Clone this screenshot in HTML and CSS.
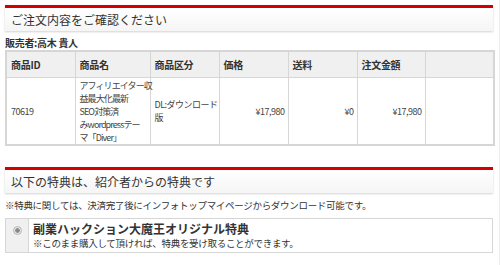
FILE: index.html
```html
<!doctype html>
<html>
<head>
  <meta charset="UTF-8" />
  <title>ご注文内容をご確認ください</title>
  <link rel="stylesheet" href="styles.css">
</head>
<body>
  <div class="page">
    <h2 class="section-title">ご注文内容をご確認ください</h2>
    <p class="seller">販売者:高木 貴人</p>
    <table class="order">
      <colgroup>
        <col class="c-id"><col class="c-name"><col class="c-kind"><col class="c-price">
        <col class="c-ship"><col class="c-total"><col class="c-extra">
      </colgroup>
      <thead>
        <tr>
          <th>商品ID</th>
          <th>商品名</th>
          <th>商品区分</th>
          <th>価格</th>
          <th>送料</th>
          <th>注文金額</th>
          <th></th>
        </tr>
      </thead>
      <tbody>
        <tr>
          <td>70619</td>
          <td class="name">アフィリエイター収<br>益最大化最新<br>SEO対策済<br>みwordpressテー<br>マ「Diver」</td>
          <td>DL:ダウンロード<br>版</td>
          <td class="num">¥17,980</td>
          <td class="num">¥0</td>
          <td class="num">¥17,980</td>
          <td></td>
        </tr>
      </tbody>
    </table>

    <h2 class="section-title second">以下の特典は、紹介者からの特典です</h2>
    <p class="note">※特典に関しては、決済完了後にインフォトップマイページからダウンロード可能です。</p>
    <div class="bonus">
      <div class="bonus-pick"><span class="radio"></span></div>
      <div class="bonus-body">
        <strong>副業ハックション大魔王オリジナル特典</strong>
        <span>※このまま購入して頂ければ、特典を受け取ることができます。</span>
      </div>
    </div>
  </div>
</body>
</html>
```

FILE: styles.css
```css
html, body {
  margin: 0;
  padding: 0;
  background: #fff;
  font-family: "Noto Sans CJK JP", "DejaVu Sans", sans-serif;
  color: #333;
}
.page {
  width: 488px;
  height: 265px;
  padding: 5px 6px 0 5px;
  border-right: 1px solid #ececec;
  box-sizing: content-box;
}
.section-title {
  margin: 0;
  height: 23px;
  line-height: 23px;
  border-top: 3px solid #d40000;
  padding: 0 6px;
  font-size: 12px;
  font-weight: normal;
  color: #333;
  background: linear-gradient(#fff, #f5f5f5);
  box-shadow: 0 1px 2px rgba(0, 0, 0, 0.18);
}
.section-title.second {
  margin-top: 21px;
}
.seller {
  margin: 0;
  padding-top: 5px;
  height: 14px;
  line-height: 14px;
  font-size: 10px;
  font-weight: bold;
  letter-spacing: -0.3px;
}
.order {
  width: 488px;
  border-collapse: collapse;
  table-layout: fixed;
  border: 2px solid #d6d6d6;
  font-size: 9px;
  line-height: 13px;
}
.c-id { width: 69px; }
.c-name { width: 75px; }
.c-kind, .c-price, .c-ship, .c-extra { width: 69px; }
.c-total { width: 68px; }
.order th, .order td {
  border: 1px solid #d6d6d6;
  padding: 0 3px 0 4px;
  text-align: left;
  vertical-align: middle;
}
.order th {
  height: 25px;
  background: #f0f0f0;
  font-weight: bold;
  font-size: 10px;
  letter-spacing: -0.3px;
}
.order td {
  height: 66px;
  letter-spacing: -0.5px;
  white-space: nowrap;
  color: #444;
}
.order td.name {
  letter-spacing: -0.9px;
}
.order td.num {
  text-align: right;
}
.note {
  margin: 6px 0 0;
  font-size: 9.5px;
  line-height: 13px;
  letter-spacing: -0.3px;
}
.bonus {
  display: flex;
  margin-top: 6px;
  height: 33px;
  border: 1px solid #d6d6d6;
}
.bonus-pick {
  width: 23px;
  background: #f0f0f0;
  border-right: 1px solid #d6d6d6;
  display: flex;
  justify-content: center;
  padding-top: 7px;
  box-sizing: border-box;
}
.radio {
  width: 9px;
  height: 9px;
  border-radius: 50%;
  border: 1px solid #b8b8b8;
  background: radial-gradient(circle, #8a8a8a 0 2px, #e4e4e4 2.5px);
  box-sizing: border-box;
}
.bonus-body {
  display: flex;
  flex-direction: column;
  padding: 2px 0 0 4px;
}
.bonus-body strong {
  font-size: 12px;
  line-height: 16px;
}
.bonus-body span {
  font-size: 9.5px;
  line-height: 13px;
  letter-spacing: -0.3px;
}
```
